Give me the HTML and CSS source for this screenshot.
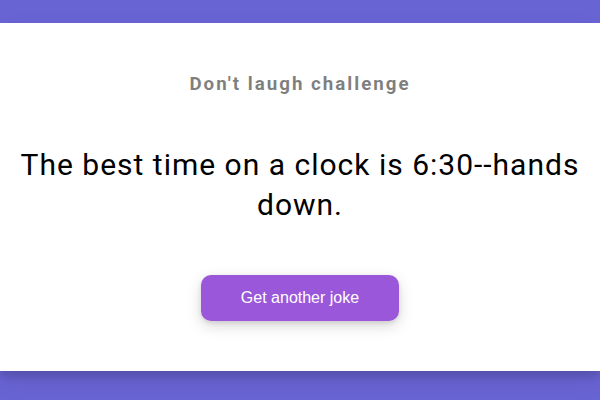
FILE: index.html
```html
<!DOCTYPE html>
<html lang="en">
<head>
<meta charset="utf-8">
<title>Dad Jokes</title>
<link rel="stylesheet" href="styles.css">
</head>
<body>
  <div class="container">
    <h3 class="title">Don't laugh challenge</h3>
    <div class="joke">The best time on a clock is 6:30--hands down.</div>
    <button class="btn">Get another joke</button>
  </div>
</body>
</html>
```
FILE: styles.css
```css
* { box-sizing: border-box; }
html, body { height: 100%; }
body {
  margin: 0;
  padding-top: 23px;
  background: #6964d4;
  font-family: Roboto, "Liberation Sans", sans-serif;
  overflow: hidden;
}
.container {
  background: #fff;
  width: 100%;
  padding: 50px 20px;
  text-align: center;
  box-shadow: 0 10px 20px rgba(0,0,0,0.1), 0 6px 6px rgba(0,0,0,0.1);
}
.title {
  margin: 0;
  font-size: 18.72px;
  font-weight: 700;
  letter-spacing: 2px;
  color: #000;
  opacity: 0.5;
}
.joke {
  font-size: 30px;
  letter-spacing: 1px;
  line-height: 40px;
  margin: 50px auto;
  max-width: 600px;
  color: #000;
}
.btn {
  background: #9b57d9;
  color: #fff;
  border: 0;
  border-radius: 10px;
  box-shadow: 0 5px 15px rgba(0,0,0,0.15), 0 2px 4px rgba(0,0,0,0.1);
  padding: 14px 40px;
  font-family: "Liberation Sans", Arial, sans-serif;
  font-size: 16px;
  cursor: pointer;
}
```
